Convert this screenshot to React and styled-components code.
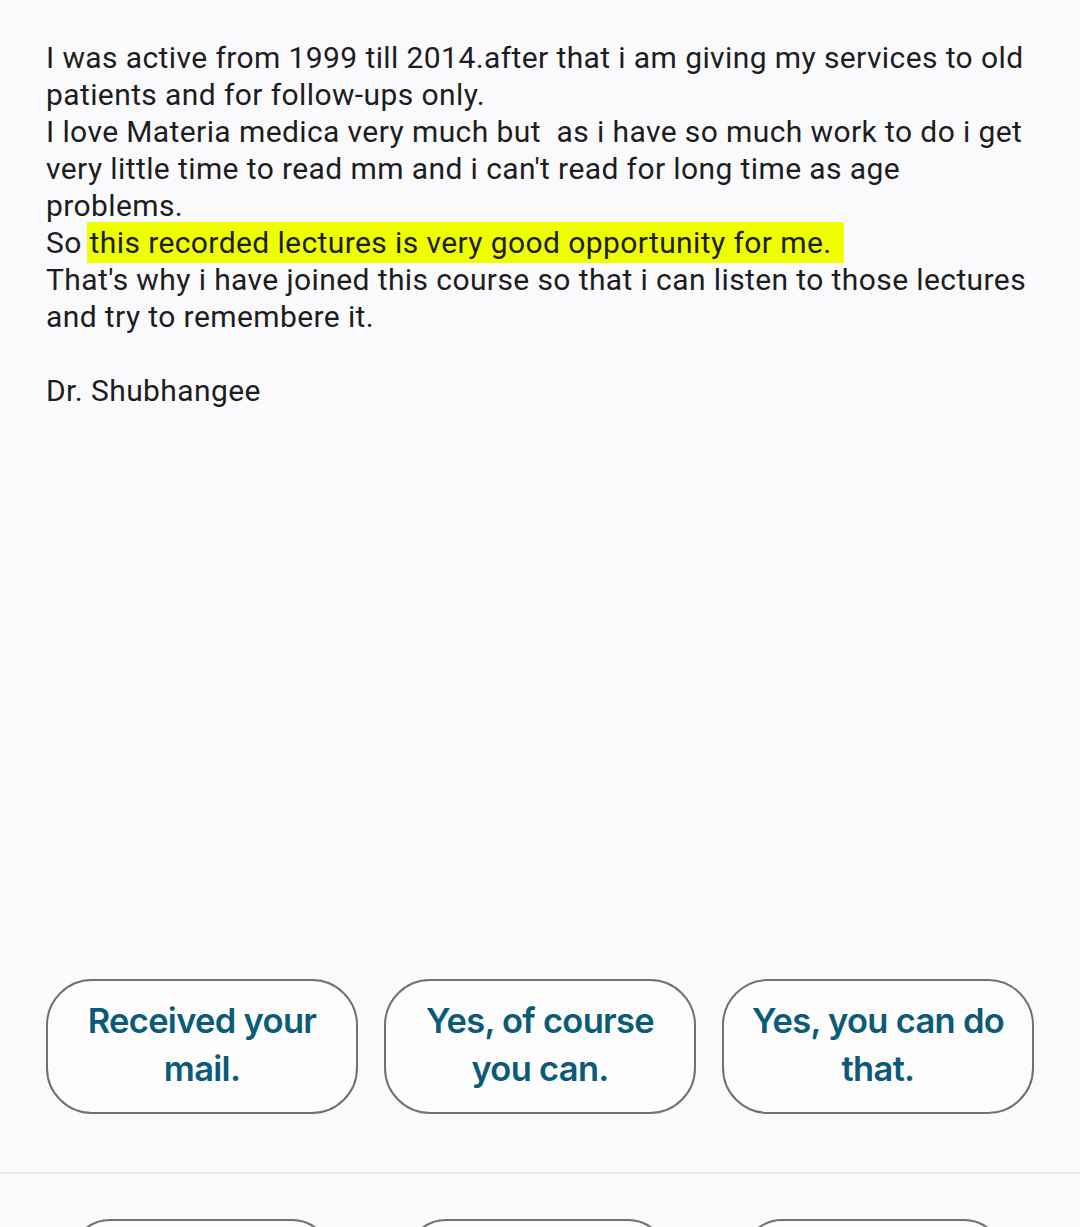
import styled, { createGlobalStyle } from "styled-components";

const Global = createGlobalStyle`
    html, body {
        margin: 0;
        padding: 0;
        background: #fafafc;
    }
    * {
        box-sizing: border-box;
    }
`

const Page = styled.div`
    display: flex;
    flex-direction: column;
    height: 1227px;
    overflow: hidden;
    background: #fafafc;
`

const Message = styled.div`
    padding: 39px 46px 0 46px;
    font-family: Roboto, "Noto Sans", sans-serif;
    font-size: 30px;
    letter-spacing: 0.4px;
    line-height: 37px;
    color: #1d1d1f;
`

const Line = styled.div`
    white-space: pre-wrap;
    min-height: 37px;
`

const Mark = styled.span`
    background: #efff00;
    margin-left: -3px;
    padding: 3px 12px 3px 3px;
`

const Replies = styled.div`
    display: flex;
    gap: 26px;
    margin-top: auto;
    margin-bottom: 58px;
    padding: 0 46px;
`

const Reply = styled.button`
    width: 312px;
    height: 135px;
    border: 2.5px solid #707174;
    border-radius: 46px;
    background: #fdfdfe;
    color: #0b5b78;
    font-family: Inter, Roboto, sans-serif;
    font-weight: 600;
    font-size: 34.5px;
    line-height: 48px;
    letter-spacing: -0.7px;
    padding: 0 18px 4px;
    text-align: center;
`

const Tray = styled.div`
    height: 55px;
    flex-shrink: 0;
    border-top: 2px solid #e7e7ea;
    padding: 45px 0 0 70px;
    display: flex;
    gap: 74px;
    overflow: hidden;
`

const TrayButton = styled.div`
    width: 262px;
    height: 100px;
    flex-shrink: 0;
    border: 2.5px solid #707174;
    border-radius: 40px;
    background: #fdfdfe;
`

const replies = ["Received your mail.", "Yes, of course you can.", "Yes, you can do that."];

export default function App() {
    return (
        <>
            <Global />
            <Page>
                <Message>
                    <Line>I was active from 1999 till 2014.after that i am giving my services to old patients and for follow-ups only.</Line>
                    <Line>I love Materia medica very much but  as i have so much work to do i get very little time to read mm and i can't read for long time as age problems.</Line>
                    <Line>So <Mark>this recorded lectures is very good opportunity for me.</Mark></Line>
                    <Line>That's why i have joined this course so that i can listen to those lectures and try to remembere it.</Line>
                    <Line></Line>
                    <Line>Dr. Shubhangee</Line>
                </Message>
                <Replies>
                    {replies.map((r) => (
                        <Reply key={r}>{r}</Reply>
                    ))}
                </Replies>
                <Tray>
                    <TrayButton />
                    <TrayButton />
                    <TrayButton />
                </Tray>
            </Page>
        </>
    )
}
